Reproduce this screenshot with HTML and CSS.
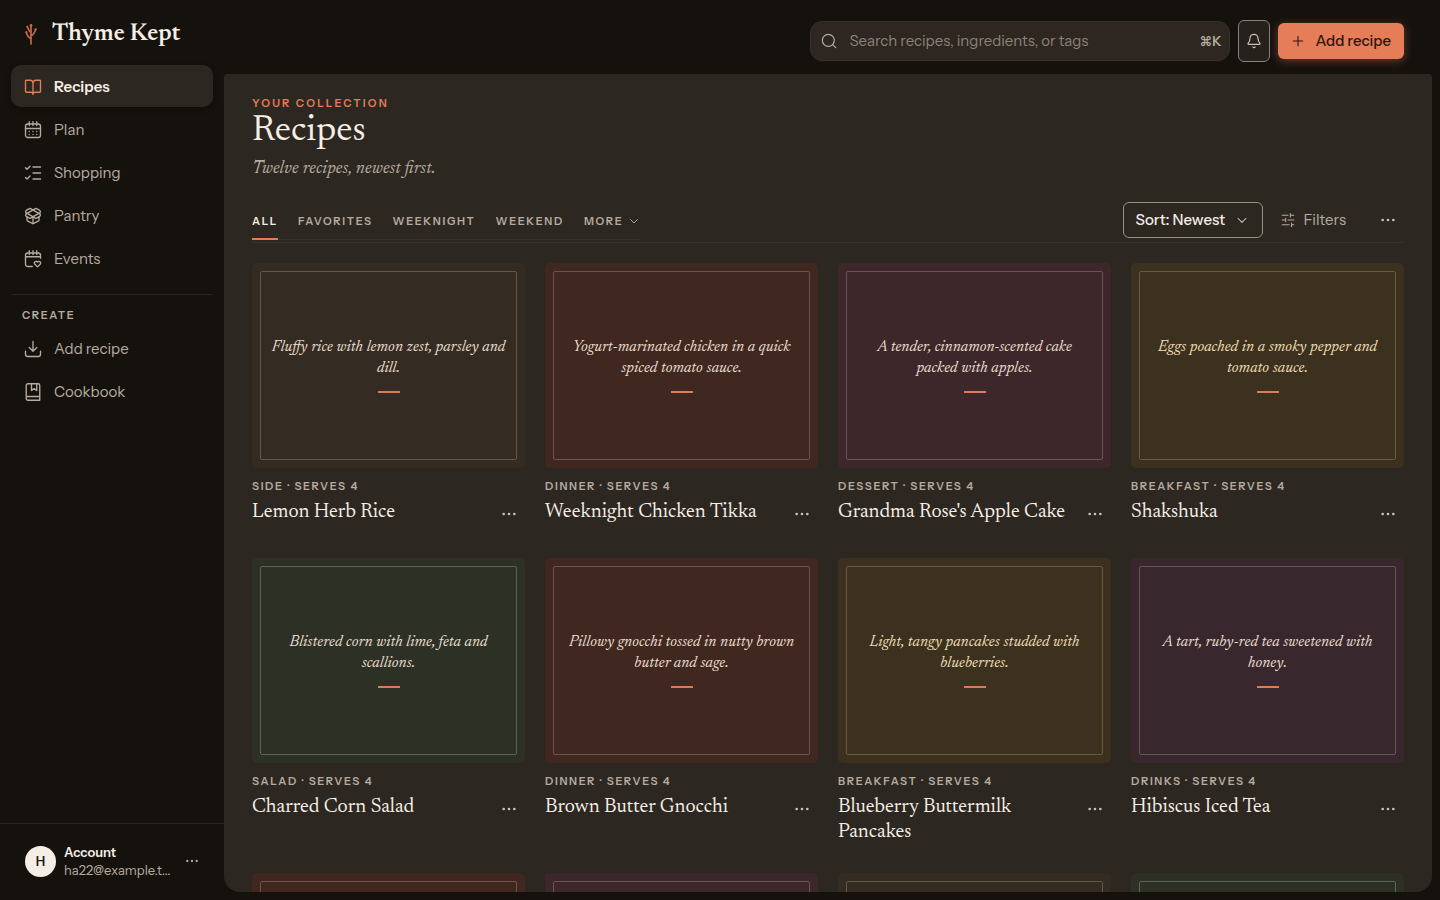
FILE: index.html
```html
<!DOCTYPE html>
<html lang="en">
<head>
<meta charset="utf-8">
<meta name="viewport" content="width=device-width, initial-scale=1">
<title>Thyme Kept</title>
<link rel="stylesheet" href="styles.css">
</head>
<body>
<svg class="sprite" aria-hidden="true">
  <symbol id="i-book" viewBox="0 0 24 24"><path d="M12 6v16M3 19a1 1 0 0 1-1-1V4a1 1 0 0 1 1-1h5a4 4 0 0 1 4 4 4 4 0 0 1 4-4h5a1 1 0 0 1 1 1v14a1 1 0 0 1-1 1h-6a3 3 0 0 0-3 2 3 3 0 0 0-3-2z"/></symbol>
  <symbol id="i-calendar" viewBox="0 0 24 24"><rect x="2" y="4" width="20" height="18" rx="3"/><path d="M7 1v5M12 1v5M17 1v5M2 10h20M7 14h.01M12 14h.01M17 14h.01M7 18h.01M12 18h.01M17 18h.01"/></symbol>
  <symbol id="i-checks" viewBox="0 0 24 24"><path d="M12 4h10M12 12h10M12 20h10M2 5l2 2 4-4M2 18l2 2 4-4"/></symbol>
  <symbol id="i-box" viewBox="0 0 24 24"><path d="M12 22v-9M15.2 2.2a1.7 1.7 0 0 1 1.6 0L21 4.600a2 2 0 0 1 0 3.200L8.800 14.800a1.700 1.700 0 0 1-1.600 0L3 12.400a2 2 0 0 1 0-3.200z"/><path d="M20 13v4a2 2 0 0 1-1.100 1.800l-6 3a2 2 0 0 1-1.800 0l-6-3A2 2 0 0 1 4 17v-4"/><path d="M21 12.400a2 2 0 0 0 0-3.200L8.800 2.200a1.700 1.700 0 0 0-1.600 0L3 4.600a2 2 0 0 0 0 3.200l12.200 7a1.700 1.700 0 0 0 1.600 0z"/></symbol>
  <symbol id="i-event" viewBox="0 0 24 24"><path d="M11 22H5a3 3 0 0 1-3-3V7a3 3 0 0 1 3-3h14a3 3 0 0 1 3 3v4M7 1v5M12 1v5M17 1v5M2 9h20"/><path d="M18 22.500l-3.500-3.500a2.200 2.200 0 0 1 0-3.200 2.300 2.300 0 0 1 3.500.4 2.300 2.300 0 0 1 3.500-.4 2.200 2.200 0 0 1 0 3.200z"/></symbol>
  <symbol id="i-download" viewBox="0 0 24 24"><path d="M12 2v13M7 10l5 5 5-5M2 15v4a3 3 0 0 0 3 3h14a3 3 0 0 0 3-3v-4"/></symbol>
  <symbol id="i-cookbook" viewBox="0 0 24 24"><path d="M5 1h14a2 2 0 0 1 2 2v20H5a2 2 0 0 1-2-2V3a2 2 0 0 1 2-2zM3 18h18M10 1v9l3.500-2.500L17 10V1"/></symbol>
  <symbol id="i-search" viewBox="0 0 24 24"><circle cx="11" cy="11" r="9"/><path d="M22 22l-4.500-4.500"/></symbol>
  <symbol id="i-bell" viewBox="0 0 24 24"><path d="M10.300 21a2 2 0 0 0 3.400 0M3.300 15.300A1 1 0 0 0 4 17h16a1 1 0 0 0 .7-1.700C19.400 14 18 12.500 18 8A6 6 0 0 0 6 8c0 4.500-1.400 6-2.700 7.300z"/></symbol>
  <symbol id="i-plus" viewBox="0 0 24 24"><path d="M4 12h16M12 4v16"/></symbol>
  <symbol id="i-chevron" viewBox="0 0 24 24"><path d="M5 9l7 7 7-7"/></symbol>
  <symbol id="i-sliders" viewBox="0 0 24 24"><path d="M2 4h10M16 4h6M2 12h6M12 12h10M2 20h12M18 20h4M16 1v6M8 9v6M18 17v6"/></symbol>
  <symbol id="i-dots" viewBox="0 0 24 24"><g fill="currentColor" stroke="none"><circle cx="4" cy="12" r="2"/><circle cx="12" cy="12" r="2"/><circle cx="20" cy="12" r="2"/></g></symbol>
  <symbol id="i-sprig" viewBox="0 0 24 24"><path d="M12 23V3M12 17C9 16 8 14 7 11M12 14c3-1 4-3 5-7M12 10C10 9 9 7 8 4"/><g fill="currentColor" stroke="none"><circle cx="12" cy="2.500" r="1.500"/><circle cx="7" cy="10" r="1.200"/><circle cx="17" cy="7" r="1.200"/><circle cx="8" cy="4" r="1"/></g></symbol>
</svg>

<div class="app">
  <aside class="sidebar">
    <a class="brand" href="#"><svg class="icon sprig"><use href="#i-sprig"/></svg><span>Thyme Kept</span></a>
    <nav class="nav" aria-label="Main">
      <a class="nav-link active" href="#" aria-current="page"><svg class="icon"><use href="#i-book"/></svg>Recipes</a>
      <a class="nav-link" href="#"><svg class="icon"><use href="#i-calendar"/></svg>Plan</a>
      <a class="nav-link" href="#"><svg class="icon"><use href="#i-checks"/></svg>Shopping</a>
      <a class="nav-link" href="#"><svg class="icon"><use href="#i-box"/></svg>Pantry</a>
      <a class="nav-link" href="#"><svg class="icon"><use href="#i-event"/></svg>Events</a>
    </nav>
    <div class="create">
      <h2 class="create-title">CREATE</h2>
      <nav class="nav" aria-label="Create">
        <a class="nav-link" href="#"><svg class="icon"><use href="#i-download"/></svg>Add recipe</a>
        <a class="nav-link" href="#"><svg class="icon"><use href="#i-cookbook"/></svg>Cookbook</a>
      </nav>
    </div>
    <button class="account" type="button">
      <span class="avatar">H</span>
      <span class="account-text"><strong>Account</strong><span class="email">ha22@example.t...</span></span>
      <svg class="icon small"><use href="#i-dots"/></svg>
    </button>
  </aside>

  <div class="content">
    <header class="topbar">
      <label class="search">
        <svg class="icon medium"><use href="#i-search"/></svg>
        <input type="search" placeholder="Search recipes, ingredients, or tags" aria-label="Search recipes">
        <kbd>⌘K</kbd>
      </label>
      <button class="bell" type="button" aria-label="Notifications"><svg class="icon"><use href="#i-bell"/></svg></button>
      <button class="add" type="button"><svg class="icon small"><use href="#i-plus"/></svg>Add recipe</button>
    </header>

    <main class="panel">
      <p class="eyebrow">YOUR COLLECTION</p>
      <h1>Recipes</h1>
      <p class="subtitle">Twelve recipes, newest first.</p>

      <div class="toolbar">
        <div class="tabs">
          <button class="tab selected" type="button">ALL</button>
          <button class="tab" type="button">FAVORITES</button>
          <button class="tab" type="button">WEEKNIGHT</button>
          <button class="tab" type="button">WEEKEND</button>
          <button class="tab" type="button">MORE <svg class="icon tiny"><use href="#i-chevron"/></svg></button>
        </div>
        <div class="tools">
          <div class="sort">
            <select aria-label="Sort recipes"><option>Sort: Newest</option></select>
            <svg class="icon small"><use href="#i-chevron"/></svg>
          </div>
          <button class="filters" type="button"><svg class="icon small"><use href="#i-sliders"/></svg>Filters</button>
          <button class="more" type="button" aria-label="More options"><svg class="icon medium"><use href="#i-dots"/></svg></button>
        </div>
      </div>

      <div class="grid">
        <article class="card">
          <div class="cover sand"><div class="frame"><p>Fluffy rice with lemon zest, parsley and dill.</p></div></div>
          <p class="meta">SIDE · SERVES 4</p>
          <div class="card-row"><h3>Lemon Herb Rice</h3><button class="more" type="button" aria-label="Recipe options"><svg class="icon medium"><use href="#i-dots"/></svg></button></div>
        </article>
        <article class="card">
          <div class="cover rust"><div class="frame"><p>Yogurt-marinated chicken in a quick spiced tomato sauce.</p></div></div>
          <p class="meta">DINNER · SERVES 4</p>
          <div class="card-row"><h3>Weeknight Chicken Tikka</h3><button class="more" type="button" aria-label="Recipe options"><svg class="icon medium"><use href="#i-dots"/></svg></button></div>
        </article>
        <article class="card">
          <div class="cover berry"><div class="frame"><p>A tender, cinnamon-scented cake packed with apples.</p></div></div>
          <p class="meta">DESSERT · SERVES 4</p>
          <div class="card-row"><h3>Grandma Rose's Apple Cake</h3><button class="more" type="button" aria-label="Recipe options"><svg class="icon medium"><use href="#i-dots"/></svg></button></div>
        </article>
        <article class="card">
          <div class="cover gold"><div class="frame"><p>Eggs poached in a smoky pepper and tomato sauce.</p></div></div>
          <p class="meta">BREAKFAST · SERVES 4</p>
          <div class="card-row"><h3>Shakshuka</h3><button class="more" type="button" aria-label="Recipe options"><svg class="icon medium"><use href="#i-dots"/></svg></button></div>
        </article>
        <article class="card">
          <div class="cover green"><div class="frame"><p>Blistered corn with lime, feta and scallions.</p></div></div>
          <p class="meta">SALAD · SERVES 4</p>
          <div class="card-row"><h3>Charred Corn Salad</h3><button class="more" type="button" aria-label="Recipe options"><svg class="icon medium"><use href="#i-dots"/></svg></button></div>
        </article>
        <article class="card">
          <div class="cover rust"><div class="frame"><p>Pillowy gnocchi tossed in nutty brown butter and sage.</p></div></div>
          <p class="meta">DINNER · SERVES 4</p>
          <div class="card-row"><h3>Brown Butter Gnocchi</h3><button class="more" type="button" aria-label="Recipe options"><svg class="icon medium"><use href="#i-dots"/></svg></button></div>
        </article>
        <article class="card">
          <div class="cover gold"><div class="frame"><p>Light, tangy pancakes studded with blueberries.</p></div></div>
          <p class="meta">BREAKFAST · SERVES 4</p>
          <div class="card-row"><h3>Blueberry Buttermilk Pancakes</h3><button class="more" type="button" aria-label="Recipe options"><svg class="icon medium"><use href="#i-dots"/></svg></button></div>
        </article>
        <article class="card">
          <div class="cover plum"><div class="frame"><p>A tart, ruby-red tea sweetened with honey.</p></div></div>
          <p class="meta">DRINKS · SERVES 4</p>
          <div class="card-row"><h3>Hibiscus Iced Tea</h3><button class="more" type="button" aria-label="Recipe options"><svg class="icon medium"><use href="#i-dots"/></svg></button></div>
        </article>
        <article class="card"><div class="cover rust"><div class="frame"></div></div></article>
        <article class="card"><div class="cover berry"><div class="frame"></div></div></article>
        <article class="card"><div class="cover sand"><div class="frame"></div></div></article>
        <article class="card"><div class="cover green"><div class="frame"></div></div></article>
      </div>
    </main>
  </div>
</div>
</body>
</html>
```
FILE: styles.css
```css
:root {
  --bg: #15120e;
  --panel: #2d2721;
  --line: #38312a;
  --text: #f5eee6;
  --muted: #b5aba0;
  --accent: #e47c57;
  --sans: "Instrument Sans", Inter, "Liberation Sans", sans-serif;
  --serif: Newsreader, "Liberation Serif", serif;
}

* { box-sizing: border-box; }

body {
  margin: 0;
  background: var(--bg);
  color: var(--text);
  font: 15px/20px var(--sans);
}

h1, h2, h3, p { margin: 0; font-weight: 400; }
a { color: inherit; text-decoration: none; }
button, input, select { font: inherit; color: inherit; background: none; border: 0; padding: 0; margin: 0; }

.sprite { position: absolute; width: 0; height: 0; }

.icon {
  width: 18px;
  height: 18px;
  flex: none;
  fill: none;
  stroke: currentColor;
  stroke-width: 1.8;
  stroke-linecap: round;
  stroke-linejoin: round;
}
.icon.medium { width: 16px; height: 16px; }
.icon.small { width: 14px; height: 14px; }
.icon.tiny { width: 12px; height: 12px; }

.app { display: flex; height: 100vh; }

/* Sidebar */
.sidebar { width: 224px; flex: none; display: flex; flex-direction: column; }

.brand {
  display: flex;
  align-items: center;
  gap: 10px;
  height: 65px;
  padding: 2px 0 0 20px;
  font: 600 24px/32px var(--serif);
}
.icon.sprig { width: 22px; height: 22px; color: #c96a4a; }

.nav { display: flex; flex-direction: column; gap: 1px; padding: 0 11px; }

.nav-link {
  display: flex;
  align-items: center;
  gap: 12px;
  height: 42px;
  padding: 1px 13px 0;
  border-radius: 10px;
  color: var(--muted);
}
.nav-link.active {
  background: #2d2722;
  color: var(--text);
  font-weight: 600;
  box-shadow: 0 2px 6px rgba(0, 0, 0, .3);
}
.nav-link.active .icon { color: var(--accent); }

.create { margin-top: 15px; }
.create-title {
  margin: 0 12px;
  padding: 12px 10px 4px;
  border-top: 1px solid #29251f;
  color: var(--muted);
  font-size: 11px;
  line-height: 16px;
  font-weight: 600;
  letter-spacing: .15em;
}

.account {
  display: flex;
  align-items: center;
  gap: 8px;
  margin-top: auto;
  height: 77px;
  padding: 0 25px 2px;
  border-top: 1px solid #29251f;
  text-align: left;
}
.avatar {
  width: 31px;
  height: 31px;
  flex: none;
  border-radius: 50%;
  background: #f5eee6;
  color: #1c1814;
  font-size: 13px;
  font-weight: 600;
  line-height: 31px;
  text-align: center;
}
.account-text { flex: 1; min-width: 0; font-size: 13px; line-height: 18px; }
.account-text strong { display: block; font-weight: 600; }
.email { display: block; white-space: nowrap; color: var(--muted); }
.account .icon { color: var(--muted); margin-left: 6px; }

/* Top bar */
.content { flex: 1; min-width: 0; display: flex; flex-direction: column; padding: 0 8px 8px 0; }

.topbar {
  display: flex;
  justify-content: flex-end;
  align-items: center;
  gap: 8px;
  flex: none;
  height: 74px;
  padding: 8px 28px 0 0;
}
.search {
  display: flex;
  align-items: center;
  gap: 12px;
  width: 420px;
  height: 40px;
  padding: 0 8px 0 10px;
  border: 1px solid var(--line);
  border-radius: 12px;
  background: #2d2621;
  color: var(--muted);
}
.search input { flex: 1; min-width: 0; outline: 0; }
.search input::placeholder { color: #8c8278; opacity: 1; }
.search kbd { font: 600 13px/20px var(--sans); }

.bell {
  display: grid;
  place-items: center;
  width: 32px;
  height: 42px;
  border: 1px solid #8a8075;
  border-radius: 6px;
  background: #26211c;
  color: #cbc1b6;
}
.bell .icon { width: 16px; height: 16px; }

.add {
  display: flex;
  align-items: center;
  gap: 10px;
  height: 36px;
  padding: 0 13px;
  border-radius: 6px;
  background: #e57d58;
  color: #2a1710;
  font-weight: 500;
  box-shadow: 0 2px 8px rgba(228, 124, 87, .4);
}

/* Panel */
.panel {
  flex: 1;
  min-height: 0;
  overflow: hidden;
  padding: 21px 28px 0;
  border-radius: 3px 3px 16px 16px;
  background: var(--panel);
}
.eyebrow { color: var(--accent); font-size: 11px; line-height: 16px; font-weight: 600; letter-spacing: .2em; }
h1 { font: 400 37px/42px var(--serif); }
.subtitle { margin-top: 4px; color: var(--muted); font: italic 18px/24px var(--serif); }

.toolbar {
  display: flex;
  justify-content: space-between;
  align-items: flex-start;
  margin-top: 21px;
  height: 41px;
  border-bottom: 1px solid var(--line);
}
.tabs { display: flex; gap: 20px; height: 38px; border-bottom: 1px solid var(--line); }
.tab {
  display: flex;
  align-items: center;
  gap: 5px;
  height: 38px;
  padding-top: 2px;
  border-bottom: 2px solid transparent;
  color: var(--muted);
  font-size: 11px;
  font-weight: 600;
  letter-spacing: .15em;
}
.tab.selected { border-color: var(--accent); color: var(--text); }

.tools { display: flex; align-items: center; }
.sort { position: relative; }
.sort select {
  appearance: none;
  width: 140px;
  height: 36px;
  padding: 0 32px 0 12px;
  border: 1px solid #9a8f83;
  border-radius: 6px;
  font-weight: 500;
}
.sort .icon { position: absolute; right: 14px; top: 11px; pointer-events: none; color: #cbc1b6; }
.filters { display: flex; align-items: center; gap: 9px; margin: 0 26px 0 18px; color: var(--muted); }
.more { display: grid; place-items: center; width: 32px; height: 30px; flex: none; color: #cbc1b6; }

/* Recipe cards */
.grid { display: grid; grid-template-columns: repeat(4, minmax(0, 1fr)); gap: 28px 20px; margin-top: 20px; }

.cover { aspect-ratio: 4 / 3; padding: 8px; border-radius: 5px; }
.frame {
  display: flex;
  flex-direction: column;
  align-items: center;
  justify-content: center;
  height: 100%;
  padding: 0 8px;
  border: 1px solid;
  border-radius: 2px;
}
.frame p { color: #eadfce; font: italic 16px/21px var(--serif); text-align: center; }
.frame p::after { content: ""; display: block; width: 22px; height: 2px; margin: 12px auto 0; background: #dc7b59; }

.sand { background: #342b22; }
.sand .frame { border-color: #625848; }
.rust { background: #402820; }
.rust .frame { border-color: #705246; }
.berry { background: #3e272b; }
.berry .frame { border-color: #6f5258; }
.gold { background: #3c301f; }
.gold .frame { border-color: #6a5b3e; }
.gold p { color: #eedfb2; }
.green { background: #2d3025; }
.green .frame { border-color: #5b6552; }
.plum { background: #38282d; }
.plum .frame { border-color: #69545e; }

.meta { margin-top: 10px; color: var(--muted); font-size: 11px; line-height: 16px; font-weight: 600; letter-spacing: .15em; }
.card-row { display: flex; align-items: flex-start; margin-top: 6px; }
.card-row h3 { flex: 1; min-width: 0; font: 400 20px/25px var(--serif); }
.card-row .more { padding-bottom: 2px; }
```
